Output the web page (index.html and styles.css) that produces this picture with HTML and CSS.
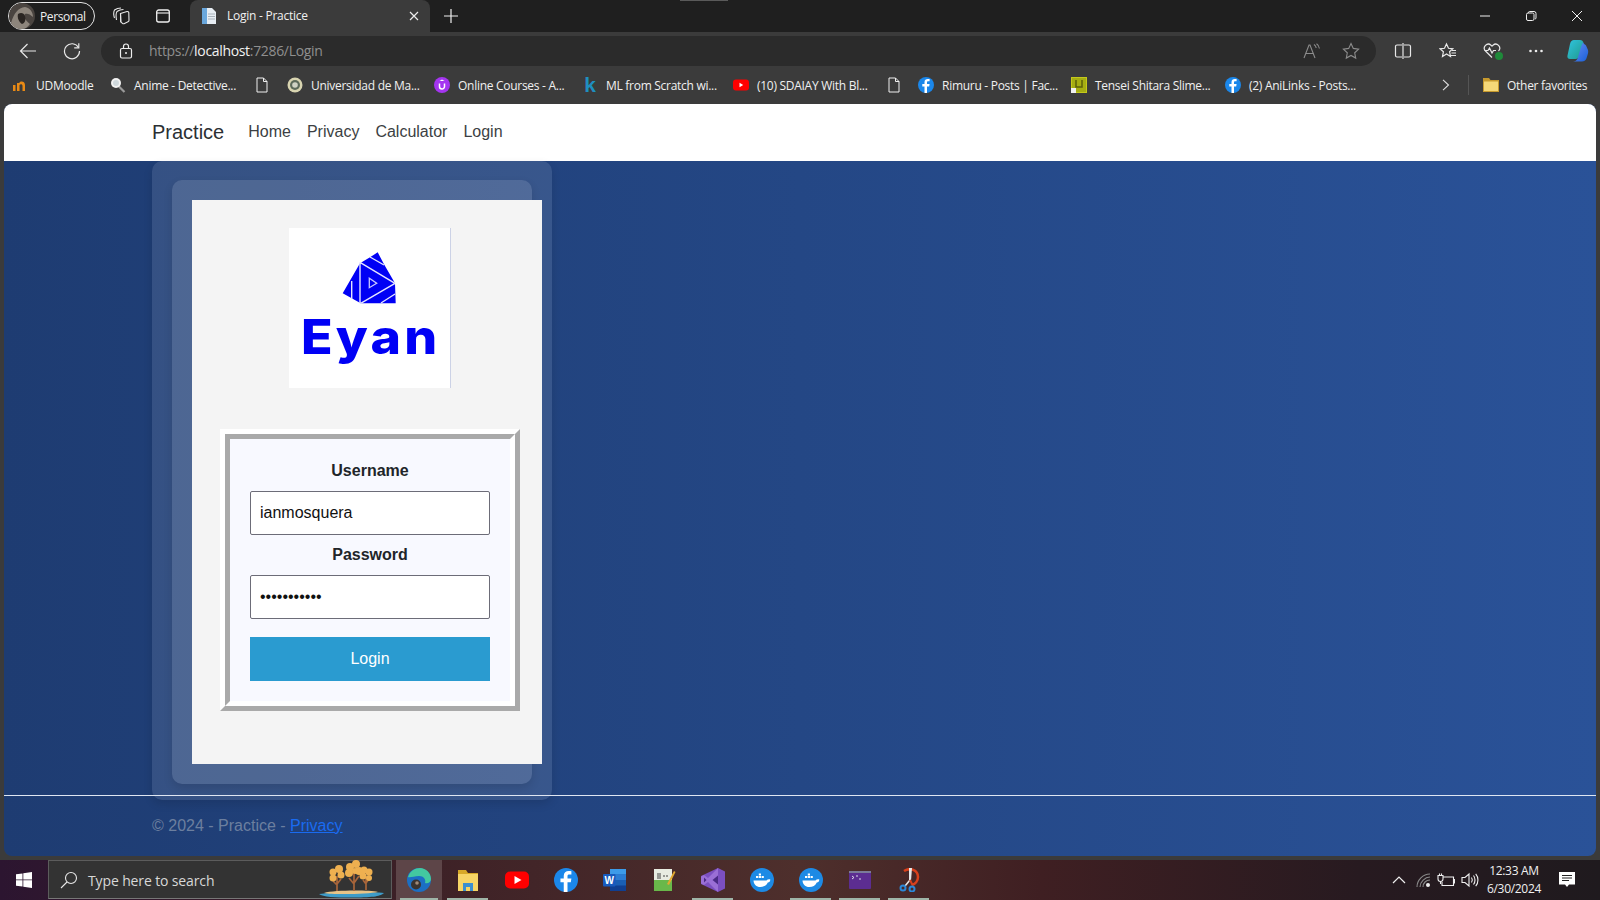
FILE: index.html
```html
<!DOCTYPE html>
<html lang="en">
<head>
<meta charset="utf-8">
<title>Login - Practice</title>
<link rel="stylesheet" href="styles.css">
</head>
<body>
<div class="titlebar">
  <div class="notch"></div>
  <div class="profile">
    <svg class="avatar" viewBox="0 0 26 26"><circle cx="13" cy="13" r="13" fill="#4a4440"/><path d="M2 20C5 10 9 5 16 4c5 1 8 5 8 10-3-3-6-4-8-3-2 3 1 7 5 10-2 3-5 5-8 5-5 0-9-2-11-6z" fill="#8d857c"/><path d="M9 11c3-2 6-1 7 2 1 4 0 7-3 8-3-2-5-6-4-10z" fill="#2a2522"/></svg>
    <span>Personal</span>
  </div>
  <svg class="ic workspaces" viewBox="0 0 18 18" fill="none" stroke="#e8e8e8" stroke-width="1.1"><path d="M8.500 6.500 15 4.500a1.500 1.500 0 0 1 1.800 1.200l.2 7.500a1.500 1.500 0 0 1-1 1.500l-4 2a1.500 1.500 0 0 1-1.500-.3L8.800 15z"/><path d="M8.500 6.500 8.800 15"/><path d="M4.500 13C3.800 9 4 6 5 4.500 7 3 9 2.500 11.500 2.500M2.500 11C1.500 8 1.500 5 2.500 3 4.500 1.500 6.500 1 9 1"/></svg>
  <svg class="ic tablist" viewBox="0 0 16 16" fill="none" stroke="#f0f0f0" stroke-width="1.3"><rect x="1.700" y="2" width="12.600" height="12" rx="2"/><path d="M1.700 5h12.600" stroke-width="1.100"/></svg>
  <div class="tab">
    <svg class="tabfav" viewBox="0 0 16 16"><path d="M1 0h10l4 4v12H1z" fill="#e7edf3"/><path d="M1 0h5v16H1z" fill="#6aa7dc"/><path d="M7 6h7M7 8.500h7M7 11h7" stroke="#a8b2bb" stroke-width="1"/></svg>
    <span class="tabtitle">Login - Practice</span>
    <svg class="tabclose" viewBox="0 0 10 10" fill="none" stroke="#ececec" stroke-width="1.200"><path d="M1 1l8 8M9 1 1 9"/></svg>
  </div>
  <svg class="ic plus" viewBox="0 0 14 14" fill="none" stroke="#f0f0f0" stroke-width="1.200"><path d="M7 0v14M0 7h14"/></svg>
  <div class="winctl">
    <svg class="winbtn" viewBox="0 0 12 12" fill="none" stroke="#f0f0f0" stroke-width="1"><path d="M1 6h10"/></svg>
    <svg class="winbtn" viewBox="0 0 12 12" fill="none" stroke="#f0f0f0" stroke-width="1"><rect x="1.500" y="3" width="7.500" height="7.500" rx="1.500"/><path d="M3.500 3V2.500a1 1 0 0 1 1-1h4.500a2 2 0 0 1 2 2v4.500a1 1 0 0 1-1 1"/></svg>
    <svg class="winbtn" viewBox="0 0 12 12" fill="none" stroke="#f0f0f0" stroke-width="1"><path d="M1 1l10 10M11 1 1 11"/></svg>
  </div>
</div>

<div class="toolbar">
  <svg class="tool back" viewBox="0 0 18 18" fill="none" stroke="#e8e8e8" stroke-width="1.200"><path d="M17 9H1.500M8.500 2 1.500 9l7 7"/></svg>
  <svg class="tool reload" viewBox="0 0 18 18" fill="none" stroke="#e8e8e8" stroke-width="1.200"><path d="M15.500 5.500A7.500 7.500 0 1 0 16.500 9"/><path d="M15.800 1.200v4.600h-4.600"/></svg>
  <div class="address">
    <svg class="lock" viewBox="0 0 14 16" fill="none" stroke="#ededed" stroke-width="1.200"><rect x="1.500" y="5.500" width="11" height="9.500" rx="1.500"/><path d="M4.500 5.500V3.500a2.500 2.500 0 0 1 5 0v2"/><circle cx="7" cy="10" r="1" fill="#ededed" stroke="none"/></svg>
    <span class="url"><span class="urldim">https://</span><span class="urlhost">localhost</span><span class="urldim">:7286/Login</span></span>
    <svg class="addr-ic readaloud" viewBox="0 0 18 16" fill="none" stroke="#8c8c8c" stroke-width="1.100"><path d="M1 15 6 2h1l5 13M3 10.500h7"/><path d="M11 1.500c1.500 1 2 2.200 2.200 3.500M13.500.8c1.800 1.200 2.700 3 2.900 4.700"/></svg>
    <svg class="addr-ic star" viewBox="0 0 18 18" fill="none" stroke="#8c8c8c" stroke-width="1.100"><path d="M9 1.500l2.300 4.900 5.300.7-3.900 3.700 1 5.300L9 13.500l-4.700 2.600 1-5.300L1.400 7.100l5.300-.7z"/></svg>
  </div>
  <svg class="tool split" viewBox="0 0 18 18" fill="none" stroke="#e8e8e8" stroke-width="1.200"><path d="M8 3H3a1.500 1.500 0 0 0-1.500 1.500v9A1.500 1.500 0 0 0 3 15h5M10 3h5a1.500 1.500 0 0 1 1.500 1.500v9A1.500 1.500 0 0 1 15 15h-5M9 1v16"/></svg>
  <svg class="tool favs" viewBox="0 0 18 18" fill="none" stroke="#e8e8e8" stroke-width="1.200"><path d="M7.500 2l2 4.300 4.300.5-3.200 3 .9 4.700L7.500 12l-4 2.500.9-4.700L1 6.800l4.500-.5z"/><path d="M13 8.500h4M12.500 11h4.500M12 13.500h5"/></svg>
  <div class="health">
    <svg class="tool heart" viewBox="0 0 18 18" fill="none" stroke="#e8e8e8" stroke-width="1.200"><path d="M9 15.500 2.500 9A4 4 0 0 1 8 3.200l1 1 1-1A4 4 0 0 1 15.500 9"/><path d="M1.500 8.500h3.500l1.500-2.500 2.500 5 1.500-2.500H13"/></svg>
    <span class="healthdot"></span>
  </div>
  <svg class="tool dots" viewBox="0 0 18 18" fill="#ececec"><circle cx="3.500" cy="9" r="1.300"/><circle cx="9" cy="9" r="1.300"/><circle cx="14.500" cy="9" r="1.300"/></svg>
  <svg class="copilot" viewBox="0 0 24 24"><defs><linearGradient id="cpa" x1="0" y1="0" x2="1" y2="1"><stop offset="0" stop-color="#30c4e0"/><stop offset="1" stop-color="#1f9a8c"/></linearGradient><linearGradient id="cpb" x1="0" y1="0" x2="1" y2="1"><stop offset="0" stop-color="#6a8cf0"/><stop offset="1" stop-color="#1860d8"/></linearGradient></defs><path d="M9 1h6c2 0 3 1 3.500 3L14.500 17c-.7 2-2 3-4 3H5c-2 0-3-1.500-2.500-3.500L5 5c.8-3 2-4 4-4z" fill="url(#cpa)"/><path d="M18 3.500c1 2 2 1.500 3 3l2 4.500c.5 2 0 3.500-.6 5.500l-1 3c-.7 2-2.400 3-4.400 3H8c2 0 4-1 4.800-3.500L16 8c.5-1.500 1.500-3 2-4.500z" fill="url(#cpb)"/></svg>
</div>

<div class="bookmarks">
  <div class="bm"><svg class="bmic" viewBox="0 0 16 16"><path d="M1 8v6h2.500V8zM5 6v8h2.500V8c1-1.500 3-1 3 1v5H13V8c0-3-2.500-4-4-3.500-1 .2-1.500.8-1.500.8V6z" fill="#e98a15"/></svg><span>UDMoodle</span></div>
  <div class="bm"><svg class="bmic" viewBox="0 0 16 16"><path d="M9 9.500l5.500 5.500" stroke="#9a9a9a" stroke-width="2.200"/><circle cx="6" cy="6" r="5" fill="#f2f2f2"/><circle cx="6" cy="6" r="3" fill="#cfd8dc"/></svg><span>Anime - Detective...</span></div>
  <div class="bm"><svg class="bmic" viewBox="0 0 16 16" fill="none" stroke="#f0f0f0" stroke-width="1"><path d="M3 1h6.500L13 4.500V15H3zM9.500 1v3.500H13"/></svg></div>
  <div class="bm"><svg class="bmic" viewBox="0 0 16 16"><circle cx="8" cy="8" r="7.500" fill="#d8d4b0"/><circle cx="8" cy="8" r="5" fill="#5c6a5a"/><circle cx="8" cy="8" r="2.800" fill="#cfd2c4"/></svg><span>Universidad de Ma...</span></div>
  <div class="bm"><svg class="bmic" viewBox="0 0 16 16"><circle cx="8" cy="8" r="8" fill="#a435f0"/><path d="M5.500 6.500v3a2.500 2.500 0 0 0 5 0v-3" fill="none" stroke="#fff" stroke-width="1.500"/><path d="M8 2.500l2.500 1.500h-5z" fill="#fff"/></svg><span>Online Courses - A...</span></div>
  <div class="bm"><span class="kfav">k</span><span>ML from Scratch wi...</span></div>
  <div class="bm"><svg class="bmic" viewBox="0 0 16 16"><rect y="2.500" width="16" height="11" rx="3" fill="#f00"/><path d="M6.500 5.800v4.400L10.200 8z" fill="#fff"/></svg><span>(10) SDAIAY With Bl...</span></div>
  <div class="bm"><svg class="bmic" viewBox="0 0 16 16" fill="none" stroke="#f0f0f0" stroke-width="1"><path d="M3 1h6.500L13 4.500V15H3zM9.500 1v3.500H13"/></svg></div>
  <div class="bm"><svg class="bmic" viewBox="0 0 16 16"><circle cx="8" cy="8" r="8" fill="#1b87ea"/><path d="M9 16V9.500h2.200l.4-2.500H9V5.500c0-.8.3-1.200 1.200-1.200h1.400V2.100C11.200 2 10.500 2 9.800 2 7.900 2 6.500 3.100 6.500 5.200V7H4.300v2.500h2.200V16z" fill="#fff"/></svg><span>Rimuru - Posts | Fac...</span></div>
  <div class="bm"><svg class="bmic" viewBox="0 0 16 16"><rect width="16" height="16" fill="#c5c91a"/><rect x="1" y="1" width="14" height="14" fill="#a5ad12"/><path d="M5 3v7h6V3" fill="none" stroke="#5a5f0a" stroke-width="1.500"/><path d="M0 11h5v5H0z" fill="#f0f0f0"/></svg><span>Tensei Shitara Slime...</span></div>
  <div class="bm"><svg class="bmic" viewBox="0 0 16 16"><circle cx="8" cy="8" r="8" fill="#1b87ea"/><path d="M9 16V9.500h2.200l.4-2.500H9V5.500c0-.8.3-1.200 1.200-1.200h1.400V2.100C11.200 2 10.500 2 9.800 2 7.900 2 6.500 3.100 6.500 5.200V7H4.300v2.500h2.200V16z" fill="#fff"/></svg><span>(2) AniLinks - Posts...</span></div>
  <svg class="bmchev" viewBox="0 0 8 12" fill="none" stroke="#e0e0e0" stroke-width="1.100"><path d="M1 .8 6.500 6 1 11.200"/></svg>
  <span class="bmsep"></span>
  <div class="bm"><svg class="bmic" viewBox="0 0 16 16"><path d="M0 1h6l1.500 2H16v12H0z" fill="#c79a2e"/><path d="M1 4.500h14V14H1z" fill="#f5d878"/></svg><span>Other favorites</span></div>
</div>

<div class="page">
  <nav class="navbar">
    <a class="brand">Practice</a>
    <a class="navlink">Home</a>
    <a class="navlink">Privacy</a>
    <a class="navlink">Calculator</a>
    <a class="navlink">Login</a>
  </nav>
  <main class="main">
    <div class="panel-outer">
      <div class="panel-inner">
        <div class="card">
          <div class="logo">
            <svg class="logomark" viewBox="0 0 161 160">
              <path d="M88.700 24.300 95 36.300l11 19 .7 20H71.700l-18-10L71 35.300l10-6z" fill="#0000f5"/>
              <path d="M71 34.300v41M71 34.300l35 21M106 55.300 71.700 75.300M81 29l14 8M92 75l14-9M62.700 53v18" fill="none" stroke="#e6e6ff" stroke-width="1.400"/>
              <path d="M80.300 50.300v9.400l7.400-4.400z" fill="none" stroke="#c8c8ff" stroke-width="1.300"/>
            </svg>
            <span class="logotext">Eyan</span>
          </div>
          <div class="frame">
            <form class="form">
              <label class="label">Username</label>
              <input class="field" type="text" value="ianmosquera">
              <label class="label">Password</label>
              <input class="field" type="password" value="ianmosquera">
              <button class="login" type="button">Login</button>
            </form>
          </div>
        </div>
      </div>
    </div>
  </main>
  <footer class="footer">
    <span class="copy">© 2024 - Practice - <a class="plink">Privacy</a></span>
  </footer>
</div>

<div class="taskbar">
  <svg class="winlogo" viewBox="0 0 16 16" fill="#fff"><path d="M0 2.300 6.500 1.400v6.100H0zM7.300 1.300 16 0v7.500H7.300zM0 8.300h6.500v6.300L0 13.700zM7.300 8.300H16V16l-8.700-1.200z"/></svg>
  <div class="search">
    <svg class="loupe" viewBox="0 0 18 18" fill="none" stroke="#e8e8e8" stroke-width="1.100"><circle cx="11" cy="7" r="5.500"/><path d="M7 11 1 17"/></svg>
    <span class="searchtext">Type here to search</span>
    <svg class="trees" viewBox="0 0 65 38"><path d="M0 34c10-2 50-3 65-1-3 3-10 4.500-30 4.500C15 37.500 4 37 0 34z" fill="#3e9cc9"/><path d="M5 33c10-3 45-3 54-1-8 2-45 3-54 1z" fill="#e8c488"/><path d="M18 31V16M14 21l4 4M22 19l-4 5M35 31V12M30 18l5 6M40 16l-5 7M47 30V16M44 20l3 4M50 19l-3 4" stroke="#a8653a" stroke-width="1.700" fill="none"/><g fill="#eeb050"><circle cx="14" cy="12" r="3.500"/><circle cx="20" cy="9" r="4"/><circle cx="22" cy="15" r="3.500"/><circle cx="14" cy="18" r="3.500"/><circle cx="31" cy="7" r="4"/><circle cx="37" cy="4" r="4"/><circle cx="40" cy="11" r="4"/><circle cx="30" cy="13" r="4"/><circle cx="36" cy="11" r="3"/><circle cx="45" cy="10" r="3.500"/><circle cx="50" cy="12" r="3.500"/><circle cx="44" cy="16" r="3.500"/><circle cx="50" cy="18" r="3"/></g></svg>
  </div>
  <div class="apps">
    <div class="app app-active running"><svg class="appic" viewBox="0 0 24 24"><circle cx="12" cy="12" r="12" fill="#1c6fc4"/><path d="M1 9C3 3 8 0 13 0c6 0 11 5 11 11 0 3-3 5-6 4 1-2 0-7-6-7-5 0-9 2-11 1z" fill="#43c8a0"/><ellipse cx="9" cy="16.500" rx="5" ry="5" fill="#3a3330"/><circle cx="10" cy="15" r="1.800" fill="#a08a78"/></svg></div>
    <div class="app running"><svg class="appic" viewBox="0 0 24 24"><path d="M2 2h8l2 3h10v18H2z" fill="#d8a928"/><path d="M2 6h20v17H2z" fill="#f7d566"/><path d="M7 15h10v8h-3v-4h-4v4H7z" fill="#3b8fd0"/></svg></div>
    <div class="app"><svg class="appic" viewBox="0 0 24 24"><rect y="3.500" width="24" height="17" rx="5" fill="#f00"/><path d="M9.500 8v8l7-4z" fill="#fff"/></svg></div>
    <div class="app"><svg class="appic" viewBox="0 0 16 16"><circle cx="8" cy="8" r="8" fill="#1b87ea"/><path d="M9 16V9.500h2.200l.4-2.500H9V5.500c0-.8.3-1.200 1.200-1.200h1.400V2.100C11.200 2 10.500 2 9.800 2 7.900 2 6.500 3.100 6.500 5.200V7H4.300v2.500h2.200V16z" fill="#fff"/></svg></div>
    <div class="app"><svg class="appic" viewBox="0 0 24 24"><path d="M7 1h16v22H7z" fill="#1a5fb4"/><path d="M7 1h16v5.500H7z" fill="#3d9be9"/><path d="M7 6.500h16V12H7z" fill="#2b7cd3"/><path d="M7 17.500h16V23H7z" fill="#103f91"/><rect y="6" width="12.500" height="12.500" rx="1" fill="#185abd"/><text class="wordw" x="6.200" y="15.800" text-anchor="middle">W</text></svg></div>
    <div class="app"><svg class="appic" viewBox="0 0 24 24"><path d="M2 1h18v22H2z" fill="#e8ece2"/><path d="M2 12h18v11H2z" fill="#69b84a"/><path d="M6 5v6M8 5v6M11 8h2M14 8h2" stroke="#444" stroke-width="1"/><path d="M15 16 22 3l1.500 1L17 17z" fill="#e2a92f"/></svg></div>
    <div class="app running"><svg class="appic" viewBox="0 0 24 24"><path d="M17 0 24 3.500v17L17 24 0 16V8z" fill="#7b4fc0"/><path d="M17 0v24L7 14l-4 3-3-1.500v-7L3 7l4 3z" fill="#9a6fd6"/><path d="M17 7.500v9L11.500 12z" fill="#4a2a86"/><path d="M3 9.500v5l2.500-2.500z" fill="#4a2a86"/></svg></div>
    <div class="app"><svg class="appic" viewBox="0 0 24 24"><circle cx="12" cy="12" r="12" fill="#1d8ae5"/><path d="M3.500 12.500h13c.8-1 2.200-1.400 3.800-1 0 2-1 3-2.500 3-1.300 3-4 4.500-7.500 4.500-4 0-6.500-2.500-6.800-6.500z" fill="#fff"/><path d="M6 8h2.200v2H6zM8.800 8H11v2H8.800zM8.800 5.500H11v2H8.800zM11.600 8h2.200v2h-2.200z" fill="#fff"/></svg></div>
    <div class="app running"><svg class="appic" viewBox="0 0 24 24"><circle cx="12" cy="12" r="12" fill="#1d8ae5"/><path d="M3.500 12.500h13c.8-1 2.200-1.400 3.800-1 0 2-1 3-2.500 3-1.300 3-4 4.500-7.500 4.500-4 0-6.500-2.500-6.800-6.500z" fill="#fff"/><path d="M6 8h2.200v2H6zM8.800 8H11v2H8.800zM8.800 5.500H11v2H8.800zM11.600 8h2.200v2h-2.200z" fill="#fff"/></svg></div>
    <div class="app running"><svg class="appic" viewBox="0 0 24 24"><rect x="1" y="3" width="22" height="18" rx="1" fill="#5c2d91"/><path d="M1 3h22v2H1z" fill="#7a7a9a"/><path d="M4 8l2 1.500L4 11M8 8h2M11 11h2" stroke="#d8d8e8" stroke-width="1" fill="none"/></svg></div>
    <div class="app running"><svg class="appic" viewBox="0 0 24 24"><path d="M7 3c6-4 14-1 14 6 0 4-3 7-6 8" fill="none" stroke="#d8401c" stroke-width="2.500"/><path d="M12 0h3l-1 13h-2z" fill="#e8e8e8"/><path d="M13 12 8 18" stroke="#e8e8e8" stroke-width="1.500"/><path d="M13 12l2.500 5" stroke="#d8401c" stroke-width="2"/><circle cx="6" cy="20" r="2.500" fill="none" stroke="#2b88d8" stroke-width="2"/><circle cx="15" cy="21" r="2.500" fill="none" stroke="#2b88d8" stroke-width="2"/></svg></div>
  </div>
  <div class="tray">
    <svg class="trayic chevup" viewBox="0 0 14 8" fill="none" stroke="#f0f0f0" stroke-width="1.200"><path d="M1 7l6-6 6 6"/></svg>
    <svg class="trayic wifi" viewBox="0 0 16 16" fill="none" stroke="#8a8a8a" stroke-width="1.100"><path d="M1 15C1 8 7 2 14 2M4 15c0-5 5-10 10-10M7 15c0-4 3-7 7-7"/><circle cx="12" cy="13" r="2" fill="#f0f0f0" stroke="none"/></svg>
    <svg class="trayic batt" viewBox="0 0 18 14" fill="none" stroke="#f0f0f0" stroke-width="1.100"><path d="M6 4h10.500v8.500H5V9M16.500 6.500h1v3.500h-1"/><path d="M1 2.500h5V6a2.500 2.500 0 0 1-5 0zM2.500.5v2M4.500.5v2M3.500 8.500V11"/></svg>
    <svg class="trayic vol" viewBox="0 0 18 16" fill="none" stroke="#f0f0f0" stroke-width="1.100"><path d="M1 5.500h3L8 2v12l-4-3.500H1z"/><path d="M10.500 5.500c1 1.500 1 3.500 0 5M12.500 3.500c2 2.500 2 6.500 0 9M14.700 1.800c3 3.500 3 9 0 12.400"/></svg>
    <div class="clock"><span>12:33 AM</span><span>6/30/2024</span></div>
    <svg class="note" viewBox="0 0 16 16"><path d="M0 0h16v12.500H10L8 15l-2-2.500H0z" fill="#fff"/><path d="M3 3.500h10M3 6h10M3 8.500h7" stroke="#222" stroke-width="1"/></svg>
  </div>
</div>
</body>
</html>
```

FILE: styles.css
```css
* { box-sizing: border-box; }
html, body { margin: 0; padding: 0; }
body {
  width: 1600px;
  height: 900px;
  overflow: hidden;
  display: flex;
  flex-direction: column;
  background: #3b3b3b;
  font-family: "Liberation Sans", Arial, sans-serif;
}

/* browser title bar */
.titlebar {
  position: relative;
  height: 32px;
  flex: none;
  display: flex;
  align-items: center;
  background: #1f1f1f;
  color: #f0f0f0;
  font: 12px "Open Sans", sans-serif;
  letter-spacing: -0.25px;
}
.notch { position: absolute; left: 680px; top: 0; width: 48px; height: 1px; background: #5a5a5a; }
.profile {
  margin-left: 8px;
  width: 87px;
  height: 28px;
  border: 1px solid #e4e4e4;
  border-radius: 14px;
  display: flex;
  align-items: center;
  gap: 5px;
  letter-spacing: -0.4px;
}
.avatar { width: 26px; height: 26px; flex: none; }
.ic { flex: none; }
.workspaces { width: 18px; height: 18px; margin-left: 17px; }
.tablist { width: 16px; height: 16px; margin-left: 25px; }
.tab {
  margin-left: 19px;
  align-self: stretch;
  width: 240px;
  background: #3b3b3b;
  border-radius: 8px 8px 0 0;
  display: flex;
  align-items: center;
  padding-bottom: 1px;
}
.tabfav { width: 16px; height: 16px; margin-left: 11px; flex: none; }
.tabtitle { margin-left: 10px; flex: 1; }
.tabclose { width: 10px; height: 10px; margin-right: 11px; }
.plus { width: 14px; height: 14px; margin-left: 14px; }
.winctl { margin-left: auto; display: flex; gap: 34px; margin-right: 17px; }
.winbtn { width: 12px; height: 12px; }

/* toolbar */
.toolbar {
  height: 34px;
  flex: none;
  display: flex;
  align-items: flex-end;
  background: #3b3b3b;
}
.tool { width: 18px; height: 18px; flex: none; margin-bottom: 6px; }
.back { margin-left: 19px; }
.reload { margin-left: 26px; }
.address {
  margin-left: 20px;
  width: 1275px;
  height: 30px;
  border-radius: 15px;
  background: #2b2b2b;
  display: flex;
  align-items: center;
  padding-bottom: 2px;
  font: 14px "Open Sans", sans-serif;
  letter-spacing: -0.33px;
}
.lock { width: 14px; height: 16px; margin-left: 18px; margin-top: 2px; flex: none; }
.url { margin-left: 16px; flex: 1; }
.urldim { color: #8f8f8f; }
.urlhost { color: #f2f2f2; }
.addr-ic { flex: none; width: 18px; height: 18px; margin-top: 2px; }
.readaloud { margin-right: 21px; height: 16px; }
.star { margin-right: 16px; }
.split { margin-left: 18px; }
.favs { margin-left: 27px; }
.health { position: relative; margin-left: 26px; display: flex; }
.heart { margin-bottom: 6px; }
.healthdot {
  position: absolute;
  right: -2px;
  bottom: 6px;
  width: 8px;
  height: 8px;
  border-radius: 50%;
  background: #1f8a3a;
}
.dots { margin-left: 26px; }
.copilot { width: 24px; height: 24px; margin-left: 20px; margin-bottom: 3px; flex: none; }

/* bookmarks */
.bookmarks {
  height: 38px;
  flex: none;
  padding-left: 12px;
  display: grid;
  grid-template-columns: 98px 144px 33px 147px 148px 151px 153px 32px 153px 154px 217px 26px 15px auto;
  align-items: center;
  background: #3b3b3b;
  color: #f0f0f0;
  font: 12px "Open Sans", sans-serif;
  letter-spacing: -0.28px;
}
.bm { display: flex; align-items: center; gap: 8px; white-space: nowrap; }
.bmic { width: 16px; height: 16px; flex: none; }
.kfav {
  width: 16px;
  text-align: center;
  color: #1f8fc0;
  font: bold 21px "Liberation Sans", sans-serif;
  line-height: 16px;
}
.bmchev { width: 8px; height: 12px; }
.bmsep { width: 1px; height: 20px; background: #555; }

/* page */
.page {
  flex: 1;
  margin: 0 4px 4px;
  border-radius: 8px;
  overflow: hidden;
  display: flex;
  flex-direction: column;
  background: linear-gradient(to right, #1e3c72, #2a5298);
  min-height: 0;
}
.navbar {
  height: 57px;
  flex: none;
  background: #fff;
  display: flex;
  align-items: center;
  gap: 16px;
  padding-left: 148px;
  font-size: 16px;
  color: #3c3f43;
}
.brand { font-size: 20px; margin-right: 8px; color: #2b2f33; }
.navlink { margin-bottom: 2px; }
.main {
  flex: 1;
  min-height: 0;
  padding-left: 148px;
  display: flex;
  align-items: flex-start;
}
.panel-outer {
  width: 400px;
  height: 639px;
  flex: none;
  padding: 19px 20px 16px;
  background: rgba(255, 255, 255, 0.1);
  border-radius: 10px;
  box-shadow: 0 4px 10px rgba(0, 0, 0, 0.12);
}
.panel-inner {
  height: 100%;
  padding: 20px;
  background: rgba(255, 255, 255, 0.12);
  border-radius: 10px;
  box-shadow: 0 4px 10px rgba(0, 0, 0, 0.12);
}
.card {
  width: 350px;
  height: 564px;
  padding: 28px 22px 0 28px;
  background: #f4f4f4;
  display: flex;
  flex-direction: column;
  align-items: flex-start;
}
.logo {
  position: relative;
  width: 162px;
  height: 160px;
  margin-left: 69px;
  background: #fff;
  border-right: 1px solid #ccd2e6;
  text-align: center;
}
.logomark { position: absolute; left: 0; top: 0; width: 161px; height: 160px; }
.logotext {
  position: absolute;
  left: 12px;
  top: 79px;
  color: #0000f5;
  font: 800 48px Inter, sans-serif;
  letter-spacing: 3px;
  line-height: 60px;
  transform: scaleX(1.08);
  transform-origin: left center;
}
.frame {
  margin-top: 41px;
  width: 300px;
  height: 282px;
  border-style: solid;
  border-width: 5px;
  border-color: #fff #a9a9a9 #a9a9a9 #fff;
}
.form {
  height: 100%;
  border-style: solid;
  border-width: 5px;
  border-color: #a9a9a9 #fff #fff #a9a9a9;
  background: #f8f9ff;
  padding: 22px 20px 0;
  display: flex;
  flex-direction: column;
  margin: 0;
}
.label {
  height: 20px;
  line-height: 20px;
  margin-bottom: 10px;
  text-align: center;
  font-weight: bold;
  font-size: 16px;
  color: #212529;
}
.field {
  width: 240px;
  height: 44px;
  flex: none;
  margin: 0 0 10px;
  padding: 0 9px;
  border: 1px solid #6c6c78;
  border-radius: 2px;
  background: #fff;
  font: 16px "Liberation Sans", sans-serif;
  color: #111;
  outline: none;
}
.login {
  width: 240px;
  height: 44px;
  flex: none;
  margin-top: 8px;
  border: 0;
  background: #2a9bd0;
  color: #fff;
  font: 16px "Liberation Sans", sans-serif;
}

/* footer */
.footer {
  height: 61px;
  flex: none;
  border-top: 1px solid #dfe6f2;
  padding: 20px 0 0 148px;
  font-size: 16px;
  line-height: 20px;
}
.copy { color: #6c7f9f; }
.plink { color: #1a6bf0; text-decoration: underline; }

/* taskbar */
.taskbar {
  height: 40px;
  flex: none;
  display: flex;
  align-items: center;
  background: linear-gradient(to right, #2c1530 0%, #3c2026 25%, #4e2f2c 50%, #3f1f22 65%, #271a20 85%, #1f1a1e 100%);
  color: #f0f0f0;
}
.winlogo { width: 16px; height: 16px; margin-left: 16px; flex: none; }
.search {
  margin-left: 16px;
  width: 344px;
  height: 39px;
  align-self: flex-start;
  flex: none;
  background: #333;
  border: 1px solid #5c5c5c;
  border-bottom-color: #777;
  display: flex;
  align-items: center;
  padding-top: 2px;
  position: relative;
  font: 14px "Open Sans", sans-serif;
  letter-spacing: -0.13px;
  color: #d8d8d8;
}
.loupe { width: 18px; height: 18px; margin-left: 11px; margin-top: -2px; flex: none; }
.searchtext { margin-left: 10px; }
.trees { position: absolute; right: 7px; bottom: 0; width: 65px; height: 38px; }
.apps { display: flex; margin-left: 2px; align-self: stretch; }
.app {
  position: relative;
  width: 49px;
  display: flex;
  align-items: center;
  justify-content: center;
}
.app-active { width: 46px; margin-left: 2px; margin-right: 1px; background: #5d4548; }
.running::after {
  content: "";
  position: absolute;
  left: 4px;
  right: 4px;
  bottom: 0;
  height: 2px;
  background: #9fb5a8;
}
.appic { width: 24px; height: 24px; }
.wordw { fill: #fff; font: bold 10px "Liberation Sans", sans-serif; }
.tray { margin-left: auto; display: flex; align-items: center; }
.trayic { flex: none; }
.chevup { width: 14px; height: 8px; margin-right: 10px; }
.wifi { width: 16px; height: 16px; margin-right: 5px; }
.batt { width: 18px; height: 14px; margin-right: 6px; }
.vol { width: 18px; height: 16px; margin-right: 1px; }
.clock {
  width: 68px;
  display: flex;
  flex-direction: column;
  align-items: center;
  font: 12px/18px "Open Sans", sans-serif;
  letter-spacing: -0.3px;
  color: #f0f0f0;
}
.note { width: 16px; height: 16px; margin: 0 25px 0 11px; flex: none; }
```
